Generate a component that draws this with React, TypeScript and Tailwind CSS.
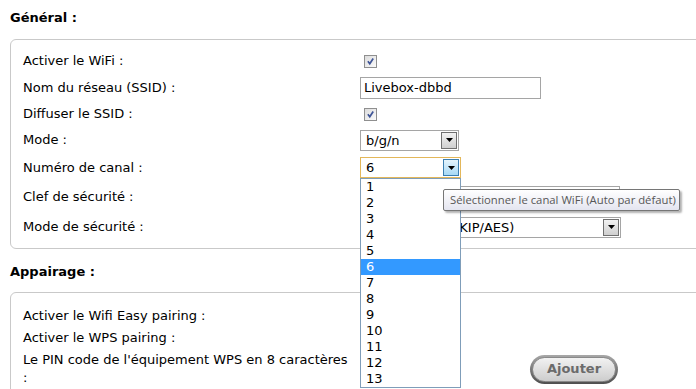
import React from "react";

const font = { fontFamily: '"DejaVu Sans", Verdana, sans-serif' };

function Checkbox() {
  return (
    <div className="ml-[4px] h-[13px] w-[13px] border border-[#8f8f8f] bg-gradient-to-br from-[#dcdcdc] to-[#fbfbfb] p-[1px]">
      <svg viewBox="0 0 11 11" className="h-full w-full">
        <path d="M2.3 5.3 L4.6 8.2 L8.8 1.8" fill="none" stroke="#3f5597" strokeWidth="2.1" />
      </svg>
    </div>
  );
}

function Arrow({ focused }: { focused?: boolean }) {
  return (
    <div
      className={
        focused
          ? "flex h-full w-[16px] items-center justify-center border border-[#3c7fb1] bg-gradient-to-b from-[#e5f4fc] to-[#a7d9f5]"
          : "flex h-full w-[16px] items-center justify-center border border-[#707070] bg-gradient-to-b from-[#f2f2f2] to-[#cfcfcf]"
      }
    >
      <svg width="7" height="4" viewBox="0 0 7 4">
        <path d="M0 0 H7 L3.5 4 Z" fill="#000" />
      </svg>
    </div>
  );
}

function Select({
  value,
  width,
  focused,
  pad = "pl-[4px]",
}: {
  value: string;
  width: string;
  focused?: boolean;
  pad?: string;
}) {
  return (
    <div
      className={`flex h-[21px] ${width} items-center justify-between border bg-white p-[1px] ${
        focused ? "border-[#e3b75a]" : "border-[#a5a5a5]"
      }`}
    >
      <span className={`whitespace-nowrap ${pad} text-[13px] leading-none text-black`}>{value}</span>
      <Arrow focused={focused} />
    </div>
  );
}

const channels = ["1", "2", "3", "4", "5", "6", "7", "8", "9", "10", "11", "12", "13"];

function Row({
  label,
  h,
  children,
}: {
  label: React.ReactNode;
  h: string;
  children?: React.ReactNode;
}) {
  return (
    <div className={`flex ${h} items-center`}>
      <div className="w-[337px] shrink-0 text-[13px] leading-[18px] text-black">{label}</div>
      <div className="flex items-center">{children}</div>
    </div>
  );
}

export default function App() {
  return (
    <div className="relative h-[389px] w-[696px] overflow-hidden bg-white" style={font}>
      <div className="pl-[10px] pt-[10px]">
        <h2 className="mb-[13px] text-[13px] font-bold leading-[16px] text-black">Général :</h2>

        <div className="w-[720px] rounded-[6px] border border-[#c9c9c9] pb-[6px] pl-[12px] pt-[8px]">
          <Row label="Activer le WiFi :" h="h-[26px]">
            <Checkbox />
          </Row>
          <Row label="Nom du réseau (SSID) :" h="h-[27px]">
            <div className="flex h-[22px] w-[181px] items-center border border-[#a5a5a5] bg-white pl-[3px] text-[13px] text-black">
              Livebox-dbbd
            </div>
          </Row>
          <Row label="Diffuser le SSID :" h="h-[26px]">
            <Checkbox />
          </Row>
          <Row label="Mode :" h="h-[26px]">
            <Select value="b/g/n" width="w-[99px]" />
          </Row>
          <Row label="Numéro de canal :" h="h-[29px]">
            <div className="relative">
              <Select value="6" width="w-[101px]" focused />
              <div className="absolute left-0 top-full z-10 w-[101px] border border-[#7f9db9] bg-white">
                {channels.map((c) => (
                  <div
                    key={c}
                    className={`h-[16px] pl-[5px] text-[13px] leading-[16px] ${
                      c === "6" ? "bg-[#3399ff] text-white" : "text-black"
                    }`}
                  >
                    {c}
                  </div>
                ))}
              </div>
            </div>
          </Row>
          <Row label="Clef de sécurité :" h="h-[30px]">
            <div className="h-[22px] w-[260px] border border-[#a5a5a5] bg-white" />
          </Row>
          <Row label="Mode de sécurité :" h="h-[30px]">
            <Select value="WPA/WPA2 (TKIP/AES)" width="w-[261px]" pad="pl-[10px]" />
          </Row>
        </div>

        <h2 className="mb-[12px] mt-[15px] text-[13px] font-bold leading-[16px] text-black">Appairage :</h2>

        <div className="h-[120px] w-[720px] rounded-[6px] border border-[#c9c9c9] pl-[12px] pt-[12px]">
          <Row label="Activer le Wifi Easy pairing :" h="h-[22px]" />
          <Row label="Activer le WPS pairing :" h="h-[22px]" />
          <div className="flex items-center pt-[2px]">
            <div className="w-[337px] shrink-0 text-[13px] leading-[18px] text-black">
              Le PIN code de l'équipement WPS en 8 caractères
              <br />:
            </div>
            <div className="ml-[170px] rounded-full bg-gradient-to-b from-[#a8a8a8] to-[#4f4f4f] p-[2px]">
              <div className="flex h-[25px] w-[84px] items-center justify-center rounded-full border border-[#8a8a8a] bg-gradient-to-b from-[#f2f2f2] to-[#cdcdcd] text-[13px] font-bold text-[#6b6b6b]">
                Ajouter
              </div>
            </div>
          </div>
        </div>
      </div>

      <div
        className="absolute left-[443px] top-[189px] z-20 flex h-[22px] w-[237px] items-center whitespace-nowrap rounded-[2px] border border-[#767676] bg-gradient-to-b from-[#ffffff] to-[#e4e5f0] pl-[6px] text-[11.3px] text-[#575757] shadow-[2px_2px_2px_rgba(0,0,0,0.3)]"
        style={{ fontFamily: '"Open Sans", "Noto Sans", sans-serif' }}
      >
        Sélectionner le canal WiFi (Auto par défaut)
      </div>
    </div>
  );
}
